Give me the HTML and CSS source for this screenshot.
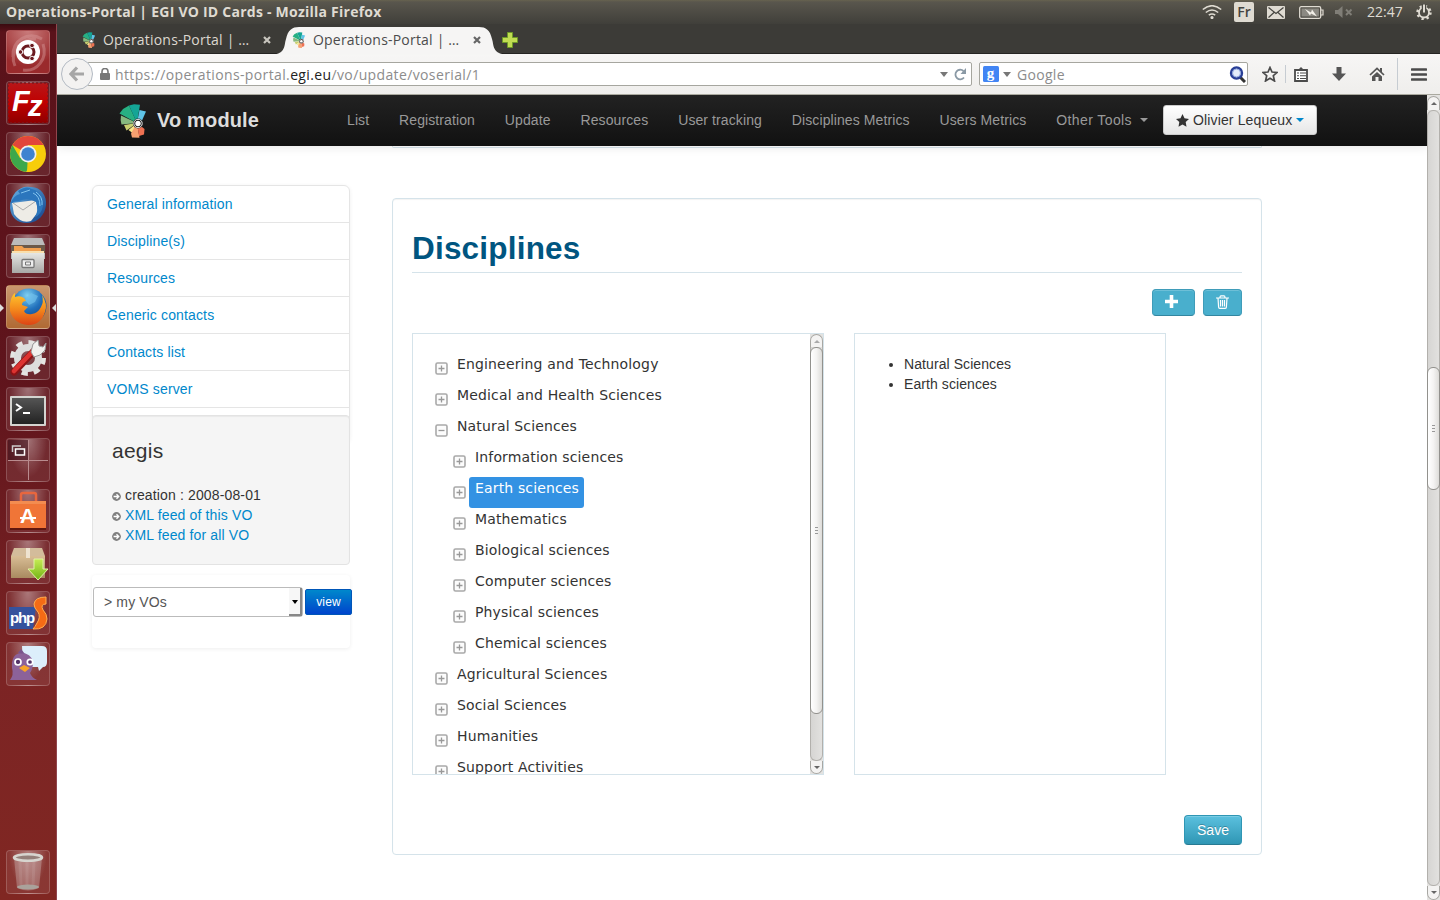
FILE: index.html
```html
<!DOCTYPE html>
<html lang="en">
<head>
<meta charset="utf-8">
<title>Operations-Portal | EGI VO ID Cards</title>
<link rel="stylesheet" href="styles.css">
</head>
<body>
<svg class="defs" width="0" height="0">
  <defs>
    <symbol id="fan" viewBox="0 0 28 34">
      <path d="M18 19 .5 9.500 4 5 10 1.500z" fill="#27b083"/>
      <path d="M18 19 10 1.500 15 .3 21 .8z" fill="#14a596"/>
      <path d="M18 19 20.500 6l6.500 1.500-4 9z" fill="#5fc4e8"/>
      <path d="M18 19 2 11.500q-1 5 .5 9z" fill="#86b97f"/>
      <path d="M18 19 5 21l2.500 5.500z" fill="#c9d070"/>
      <path d="M18 19 9.500 26l4 3z" fill="#f6e389"/>
      <path d="M18 19 12 29.500l1 4 7.500.3z" fill="#f6a070"/>
      <path d="M18 19 20 32l5-1.500.5-5.500z" fill="#ee7152"/>
      <circle cx="19" cy="19.500" r="5" fill="#1b1b1b"/>
      <circle cx="19" cy="19.500" r="4.200" fill="none" stroke="#fff" stroke-width=".9"/>
      <circle cx="19" cy="19.500" r="2.700" fill="#fff"/>
    </symbol>
    <symbol id="plus" viewBox="0 0 13 13">
      <rect x="1" y="1" width="11" height="11" rx="1.500" fill="#fcfcfc" stroke="#a9a9a9" stroke-width="1.600"/>
      <path d="M3.500 6.500h6M6.500 3.500v6" stroke="#999" stroke-width="1.300"/>
    </symbol>
    <symbol id="minus" viewBox="0 0 13 13">
      <rect x="1" y="1" width="11" height="11" rx="1.500" fill="#fcfcfc" stroke="#a9a9a9" stroke-width="1.600"/>
      <path d="M3.500 6.500h6" stroke="#999" stroke-width="1.300"/>
    </symbol>
    <symbol id="arrow" viewBox="0 0 9 9">
      <circle cx="4.500" cy="4.500" r="4.400" fill="#808080"/>
      <path d="M1.600 4.500H6M4.500 2.200 6.800 4.500 4.500 6.800" stroke="#fff" stroke-width="1.300" fill="none"/>
    </symbol>
    <linearGradient id="box" x2="0" y2="1"><stop stop-color="#d8bd95"/><stop offset="1" stop-color="#a98a60"/></linearGradient>
    <linearGradient id="dark" x2="0" y2="1"><stop stop-color="#555"/><stop offset="1" stop-color="#222"/></linearGradient>
    <linearGradient id="grey" x2="0" y2="1"><stop stop-color="#e6e6e4"/><stop offset="1" stop-color="#a8a8a6"/></linearGradient>
    <linearGradient id="fzbg" x2="0" y2="1"><stop stop-color="#b81618"/><stop offset=".5" stop-color="#c00000"/><stop offset="1" stop-color="#8e0000"/></linearGradient>
    <linearGradient id="fox" x2="0" y2="1"><stop stop-color="#ffc52e"/><stop offset=".5" stop-color="#f48a1c"/><stop offset="1" stop-color="#dd4414"/></linearGradient>
    <radialGradient id="globe" cx=".45" cy=".2" r=".8"><stop stop-color="#7fd0f2"/><stop offset=".5" stop-color="#2272bd"/><stop offset="1" stop-color="#123a78"/></radialGradient>
    <linearGradient id="bird" x2="1" y2="1"><stop stop-color="#66b3e8"/><stop offset="1" stop-color="#123f86"/></linearGradient>
    <linearGradient id="green" x2="0" y2="1"><stop stop-color="#c6ec55"/><stop offset="1" stop-color="#71b414"/></linearGradient>
  </defs>
</svg>

<div class="titlebar">
  <span class="wintitle">Operations-Portal | EGI VO ID Cards - Mozilla Firefox</span>
  <div class="tray">
    <svg width="20" height="14" viewBox="0 0 20 14" fill="none" stroke="#dfdbd2" stroke-width="1.600"><path d="M.8 4.500q9.200-7.500 18.400 0M3.800 7.500q6.200-5 12.400 0M6.800 10.200q3.200-2.400 6.400 0"/><circle cx="10" cy="12.500" r=".8" fill="#dfdbd2"/></svg>
    <span class="kbd">Fr</span>
    <svg class="mail" width="18" height="13" viewBox="0 0 18 13"><rect width="18" height="13" rx="1" fill="#dfdbd2"/><path d="m1.500 1.500 7.500 6 7.500-6M1.500 11.500 7 6.500M16.500 11.500 11 6.500" stroke="#45443f" stroke-width="1.200" fill="none"/></svg>
    <svg class="bat" width="25" height="13" viewBox="0 0 25 13"><rect x=".7" y=".7" width="21" height="11.600" rx="1.500" fill="none" stroke="#dfdbd2" stroke-width="1.300"/><rect x="2.500" y="2.500" width="17.400" height="8" fill="#8b8982"/><path d="M22 4h2v5h-2" fill="none" stroke="#dfdbd2" stroke-width="1.200"/><path d="m6 3 6 3.500 1-3 5 7-6-3-1 2z" fill="#f2efe8"/></svg>
    <svg class="vol" width="18" height="12" viewBox="0 0 18 12"><path d="M0 4h3l4.500-4v12L3 8H0z" fill="#807e77"/><path d="m11 3.500 5.500 5.500M16.500 3.500 11 9" stroke="#807e77" stroke-width="1.900"/></svg>
    <span class="clock">22:47</span>
    <svg class="gear" width="16" height="16" viewBox="0 0 16 16" fill="none" stroke="#dfdbd2"><circle cx="8" cy="8.500" r="6.300" stroke-width="2.800" stroke-dasharray="2.200 2.740"/><circle cx="8" cy="8.500" r="5" stroke-width="1.800"/><path d="M8 0v8" stroke="#4a4943" stroke-width="4.500"/><path d="M8 .5v8" stroke-width="2"/></svg>
  </div>
</div>

<div class="desktop">
  <aside class="launcher">
    <div class="tile red"><svg viewBox="0 0 44 44"><path d="M7 27C6 10 22 1 36 9M37 14c5 15-6 28-20 26M9 36C2 20 18 8 30 9" stroke="#d69a9a" stroke-width="3" fill="none" opacity=".45"/><circle cx="22" cy="22" r="12" fill="#fff"/><circle cx="22" cy="22" r="6" fill="none" stroke="#6b1a1f" stroke-width="3"/><g fill="#6b1a1f" stroke="#fff" stroke-width="1"><circle cx="14.500" cy="22" r="2.300"/><circle cx="26" cy="15.500" r="2.300"/><circle cx="26" cy="28.500" r="2.300"/></g></svg></div>
    <div class="tile"><svg viewBox="0 0 44 44"><rect x="2" y="2" width="40" height="40" fill="url(#fzbg)"/><rect x="2" y="2" width="40" height="40" fill="none" stroke="#7a1a1f" stroke-width="1.500" stroke-dasharray="2 2"/><text class="fz" x="6" y="30">F<tspan x="22" y="35">z</tspan></text></svg></div>
    <div class="tile"><svg viewBox="0 0 44 44"><circle cx="22" cy="22" r="18" fill="#f7cd0b"/><path d="M22 22 6.400 13A18 18 0 0 1 37.600 13H22z" fill="#e2463b"/><path d="M22 22 21 40A18 18 0 0 1 6.400 13L14 26z" fill="#3da84b"/><path d="m29 26-9 14 4-.2z" fill="#f7cd0b"/><circle cx="22" cy="22" r="8.500" fill="#f1f1f1"/><circle cx="22" cy="22" r="6.800" fill="#3f83d0"/></svg></div>
    <div class="tile"><svg viewBox="0 0 44 44"><path d="M4 25C4 10 15 2 24 4c10-1 17 8 16 18-1 10-8 17-17 18C12 41 5 35 4 25z" fill="url(#bird)"/><path d="m6 20 24-3 2 12-7 9q-10 3-17-7z" fill="#eeece6"/><path d="m7 20 10 7 13-9" stroke="#aaa" stroke-width="1" fill="none"/><path d="M4 21q4-9 10-10L12 8q8-6 14-2 12 3 11 17-2 9-8 11 4-7 1-15-8-5-17-1-5 0-9 3z" fill="#2b76bd"/><path d="m15 10 9-3M27 10q7 3 7 13M30 9q7 5 6 13" stroke="#83c3ed" fill="none"/></svg></div>
    <div class="tile"><svg viewBox="0 0 44 44"><path d="M8 4h28l3 7v14H5V11z" fill="#bbb"/><path d="M5 11h34v8H5z" fill="#6b5949"/><path d="M8 12h8l2 2h17v6H8z" fill="#f1a050"/><path d="M6 17h32v2H6z" fill="#f9dfad"/><path d="M6 19h32v20H6z" fill="url(#grey)"/><rect x="16" y="25.500" width="12" height="8" rx="1" fill="#eee" stroke="#777" stroke-width="1.300"/><path d="M19.500 28h5v3h-5z" fill="none" stroke="#777"/></svg></div>
    <div class="tile active"><svg viewBox="0 0 44 44"><circle cx="23" cy="21" r="17.500" fill="url(#globe)"/><path d="m25 8 7 3-3 6-6 3-4-5z" fill="#72c2ed" opacity=".65"/><path d="M5 14q2-5 4-6v4q5-2 9 1l2 3q-4 0-4 4l6 2-4 4q2 4 8 3 6-1 9-7 3-5 1-12 6 9 3 17-4 13-17 13Q8 39 4 26q-1-6 1-12z" fill="url(#fox)"/></svg></div>
    <div class="tile"><svg viewBox="0 0 44 44"><circle cx="22" cy="22" r="15" fill="none" stroke="#e4e4e2" stroke-width="6" stroke-dasharray="6 5.780"/><circle cx="22" cy="22" r="10.500" fill="none" stroke="#ddd" stroke-width="7"/><path d="m8 36 20-21" stroke="#8e1315" stroke-width="7" stroke-linecap="round"/><path d="m8 35 19-20" stroke="#dd3331" stroke-width="4.500" stroke-linecap="round"/><path d="m25 16 2-8 5-4 1 6 4 1 3-4-1 7-5 5-6 2z" fill="#f1f1ef" stroke="#999"/></svg></div>
    <div class="tile"><svg viewBox="0 0 44 44"><rect x="4" y="9" width="36" height="30" rx="1" fill="#d4d4d0"/><rect x="6" y="11" width="32" height="26" fill="url(#dark)"/><path d="m10 17 5 3.500-5 3.500" stroke="#fff" stroke-width="2" fill="none"/><path d="M17 26h7" stroke="#fff" stroke-width="2"/></svg></div>
    <div class="tile"><svg viewBox="0 0 44 44"><path d="M2 2h20v20H2z" fill="#40101a" opacity=".6"/><path d="M22.500 2v40M2 22.500h40" stroke="#b98b8e"/><path d="M6.500 14V8H15" stroke="#ccc" fill="none" stroke-width="1.500"/><path d="M9.500 11h9v6h-9z" fill="#4a2830" stroke="#fff" stroke-width="1.500"/></svg></div>
    <div class="tile"><svg viewBox="0 0 44 44"><path d="M15 15V6q0-2 2-2h11q2 0 2 2v9" stroke="#e8663e" stroke-width="2.500" fill="none"/><path d="M4 12h36v28H4z" fill="#f07537"/><path d="M4 12h36v3H4z" fill="#f38c50"/><path d="M4 39h36v2H4z" fill="#61170e"/><text class="bag" x="14" y="34">A</text><path d="M14 29h16" stroke="#fff" stroke-width="2"/></svg></div>
    <div class="tile"><svg viewBox="0 0 44 44"><path d="m8 8 28 0 3 8H5z" fill="#d3bc9b"/><path d="M5 16h34v22H5z" fill="url(#box)"/><path d="M20 8h4v10h-4z" fill="#eee3d0"/><path d="M28 19h9v10h5L32 40 22 29h6z" fill="url(#green)" stroke="#e0f4a4" stroke-width="1"/></svg></div>
    <div class="tile"><svg viewBox="0 0 44 44"><path d="M3 16h27l-3 22H3z" fill="#35529d"/><path d="M40 6q-11 0-12 7 0 4 4 8 3 5-1 11-2 4-4 6 13 1 14-10 0-5-4-9-3-6 3-6z" fill="#f56b15" stroke="#ffae52"/><text class="php" x="4" y="32">php</text></svg></div>
    <div class="tile"><svg viewBox="0 0 44 44"><path d="M16 4h20q5 0 5 5v11q0 5-4 5l-4 4-1-4H17z" fill="#dceefb"/><path d="M4 38q4-5 2-12-1-14 9-15 10 0 12 9 0 7-3 11 2 5 7 7z" fill="#8c6299"/><path d="m12 11 3-4 4 5z" fill="#79538c"/><circle cx="12" cy="20" r="3" fill="#543468" stroke="#fff" stroke-width="1.700"/><circle cx="24" cy="20" r="2.700" fill="#543468" stroke="#fff" stroke-width="1.700"/><path d="m13 26 5-3 6 3-5 4z" fill="#f8a427"/></svg></div>
    <div class="tile trash"><svg viewBox="0 0 44 44"><path d="m8 8 3 30q11 5 22 0l3-30z" fill="#ded1cf" opacity=".32"/><path d="m14 12 1 23M21 12v25M28 12l-1 24" stroke="#fff" opacity=".08" stroke-width="3"/><ellipse cx="22" cy="37" rx="11" ry="2.500" fill="#aaa29b"/><ellipse cx="22" cy="7.500" rx="14" ry="3.200" fill="#94807a" stroke="#d7d5cf" stroke-width="2.500"/></svg></div>
  </aside>

  <div class="browser">
    <div class="tabs">
      <svg class="tabshape" width="244" height="30" viewBox="0 0 244 30"><path d="M0 29.500C14 29 12 20 14 14 16 5 20 2 27 2H207C214 2 218 5 220 14 222 20 220 29 235 29.500z" fill="#f6f5f4"/></svg>
      <div class="tab"><svg class="fav"><use href="#fan"/></svg><span class="tabtext">Operations-Portal | …</span><svg class="x" viewBox="0 0 8 8"><path d="m1 1 6 6M7 1 1 7"/></svg></div>
      <div class="tab current"><svg class="fav"><use href="#fan"/></svg><span class="tabtext">Operations-Portal | …</span><svg class="x" viewBox="0 0 8 8"><path d="m1 1 6 6M7 1 1 7"/></svg></div>
      <svg class="newtab" width="16" height="16" viewBox="0 0 16 16"><path d="M5.500.5h5v5h5v5h-5v5h-5v-5h-5v-5h5z" fill="#c0dc52" stroke="#6d9a27"/></svg>
    </div>
    <div class="toolbar">
      <div class="back"><svg width="16" height="16" viewBox="0 0 16 16"><path d="M8 1.500 2 8l6 6.500M2 8h13" stroke="#a6a6a6" stroke-width="3.200" fill="none"/></svg></div>
      <div class="url">
        <svg width="10" height="12" viewBox="0 0 10 12"><path d="M2 6V3.500a3 3 0 0 1 6 0V6" stroke="#777" stroke-width="1.600" fill="none"/><rect y="5" width="10" height="7" rx="1" fill="#777"/></svg>
        <span class="address">https://operations-portal.<b>egi.eu</b>/vo/update/voserial/1</span>
        <i class="tri"></i>
        <svg class="reload" width="13" height="13" viewBox="0 0 13 13"><path d="M10 9.500A4.800 4.800 0 1 1 9.500 3" fill="none" stroke="#8a99a5" stroke-width="1.800"/><path d="M12 0v6H6.500z" fill="#8a99a5"/></svg>
      </div>
      <div class="search">
        <svg width="16" height="16"><rect width="16" height="16" rx="1.500" fill="#4285f4"/><text class="goog" x="3.800" y="12">g</text></svg>
        <i class="tri"></i><span class="google">Google</span>
        <svg class="lens" width="17" height="17" viewBox="0 0 17 17"><path d="m11 11 5 5" stroke="#333" stroke-width="3"/><circle cx="7.500" cy="7" r="5.500" fill="#e5edfa" stroke="#293f96" stroke-width="2.400"/><circle cx="7.500" cy="7" r="4" fill="none" stroke="#8fa5dd"/></svg>
      </div>
      <div class="tools">
        <svg width="16" height="16" viewBox="0 0 16 16"><path d="m8 1.500 2 4.500 5 .5-3.700 3.200L12.500 15 8 12.300 3.500 15l1.200-5.300L1 6.500 6 6z" fill="none" stroke="#4b4b4b" stroke-width="1.700"/></svg>
        <i class="sep"></i>
        <svg width="14" height="15" viewBox="0 0 14 15"><path d="M1 3h12v11H1z" fill="#fff" stroke="#4b4b4b" stroke-width="1.800"/><path d="m4 3 3-3 3 3z" fill="#4b4b4b"/><path d="M3 6h2M6 6h6M3 8.800h2M6 8.800h6M3 11.500h2M6 11.500h6" stroke="#4b4b4b" stroke-width="1.100"/></svg>
        <svg width="14" height="14" viewBox="0 0 14 14"><path d="M4.500 0h5v6.500H14L7 14 0 6.500h4.500z" fill="#555"/></svg>
        <svg width="16" height="14" viewBox="0 0 16 14"><path d="M1 8 8 1.500 15 8" fill="none" stroke="#555" stroke-width="1.700"/><path d="M3 9.500 8 5l5 4.500V14H9.500v-4h-3v4H3z" fill="#555"/><path d="M11 1h2v4h-2z" fill="#555"/></svg>
        <i class="sep tall"></i>
        <svg width="16" height="13" viewBox="0 0 16 13"><path d="M1 1.500h14M1 6.500h14M1 11.500h14" stroke="#4b4b4b" stroke-width="2.700" stroke-linecap="round"/></svg>
      </div>
    </div>

    <div class="viewport">
      <div class="page">
        <nav class="navbar">
          <svg class="logo"><use href="#fan"/></svg>
          <span class="brand">Vo module</span>
          <div class="links"><a>List</a><a>Registration</a><a>Update</a><a>Resources</a><a>User tracking</a><a>Disciplines Metrics</a><a>Users Metrics</a><a class="drop">Other Tools<i class="caret"></i></a></div>
          <div class="user"><svg width="13" height="13" viewBox="0 0 13 13"><path d="m6.500 0 2 4.300 4.500.6-3.300 3.200.8 4.700-4-2.300-4 2.300.8-4.700L0 4.900l4.500-.6z" fill="#333"/></svg><span>Olivier Lequeux</span><i class="caret blue"></i></div>
        </nav>
        <div class="content">
          <div class="side">
            <ul class="sidenav"><li>General information</li><li>Discipline(s)</li><li>Resources</li><li>Generic contacts</li><li>Contacts list</li><li>VOMS server</li></ul>
            <section class="well">
              <h3>aegis</h3>
              <p><svg><use href="#arrow"/></svg>creation : 2008-08-01</p>
              <p class="link"><svg><use href="#arrow"/></svg>XML feed of this VO</p>
              <p class="link"><svg><use href="#arrow"/></svg>XML feed for all VO</p>
            </section>
            <div class="picker"><div class="select"><span>&gt; my VOs</span><b><i></i></b></div><div class="view">view</div></div>
          </div>
          <main class="main">
            <div class="prev"></div>
            <section class="panel">
              <h1>Disciplines</h1>
              <div class="actions">
                <div class="btn add"><svg width="13" height="13" viewBox="0 0 13 13"><path d="M6.500 0v13M0 6.500h13" stroke="#fff" stroke-width="3.600"/></svg></div>
                <div class="btn del"><svg width="13" height="14" viewBox="0 0 13 14" fill="none" stroke="#fff" stroke-width="1.200"><path d="M0 3h13M4 2.500Q4 .8 5 .8h3q1 0 1 1.700M2 3l.6 9q0 1.300 1.200 1.300h5.400q1.200 0 1.200-1.300L11 3M4.500 5v6.500M6.500 5v6.500M8.500 5v6.500"/></svg></div>
              </div>
              <div class="columns">
                <div class="tree">
                  <ul>
                    <li><svg><use href="#plus"/></svg><span>Engineering and Technology</span></li>
                    <li><svg><use href="#plus"/></svg><span>Medical and Health Sciences</span></li>
                    <li><svg><use href="#minus"/></svg><span>Natural Sciences</span></li>
                    <li class="sub"><svg><use href="#plus"/></svg><span>Information sciences</span></li>
                    <li class="sub"><svg><use href="#plus"/></svg><span class="selected">Earth sciences</span></li>
                    <li class="sub"><svg><use href="#plus"/></svg><span>Mathematics</span></li>
                    <li class="sub"><svg><use href="#plus"/></svg><span>Biological sciences</span></li>
                    <li class="sub"><svg><use href="#plus"/></svg><span>Computer sciences</span></li>
                    <li class="sub"><svg><use href="#plus"/></svg><span>Physical sciences</span></li>
                    <li class="sub"><svg><use href="#plus"/></svg><span>Chemical sciences</span></li>
                    <li><svg><use href="#plus"/></svg><span>Agricultural Sciences</span></li>
                    <li><svg><use href="#plus"/></svg><span>Social Sciences</span></li>
                    <li><svg><use href="#plus"/></svg><span>Humanities</span></li>
                    <li><svg><use href="#plus"/></svg><span>Support Activities</span></li>
                  </ul>
                  <div class="scroll inner"><i class="up"></i><div class="trough"><b></b></div><i class="down"></i></div>
                </div>
                <div class="chosen"><ul><li>Natural Sciences</li><li>Earth sciences</li></ul></div>
              </div>
              <div class="save">Save</div>
            </section>
          </main>
        </div>
      </div>
      <div class="scroll outer"><i class="up"></i><div class="trough"><b></b></div><i class="down"></i></div>
    </div>
  </div>
</div>
</body>
</html>
```
FILE: styles.css
```css
* { box-sizing: border-box; }
body { margin: 0; width: 1440px; height: 900px; overflow: hidden; display: flex; flex-direction: column; font: 14px/20px "Liberation Sans", Arial, sans-serif; color: #333; background: #fff; }
svg { display: block; flex: none; }
ul, p, h1, h3 { margin: 0; padding: 0; }
ul { list-style: none; }
.defs { position: absolute; }

.titlebar { height: 24px; flex: none; display: flex; align-items: center; justify-content: space-between; padding: 0 8px 0 6px; background: linear-gradient(#67634f 0, #59564d 2px, #403f3a); color: #dfdbd2; font-family: "Open Sans", "Noto Sans", sans-serif; }
.wintitle { font-weight: 700; font-size: 14px; letter-spacing: .24px; white-space: nowrap; }
.tray { display: flex; align-items: center; }
.kbd { width: 20px; height: 20px; margin-left: 12px; border-radius: 2px; background: #dfdbd2; color: #45443f; text-align: center; font-size: 14px; font-weight: 600; }
.mail { margin-left: 13px; }
.bat { margin-left: 14px; }
.vol { margin-left: 11px; }
.clock { width: 37px; margin-left: 14px; font-size: 14px; letter-spacing: 0; }
.gear { margin-left: 12px; }

.desktop { flex: 1; display: flex; min-height: 0; }
.launcher { width: 57px; flex: none; display: flex; flex-direction: column; gap: 7px; padding: 6px 0 6px 6px; border-right: 1px solid #91454d; background: linear-gradient(#3a0b10 0, #5a121a 8px, #5f141c 40%, #7c2424 75%, #802722); }
.tile { position: relative; flex: none; width: 44px; height: 44px; border-radius: 4px; background: radial-gradient(ellipse at 50% 0, #fff6, #ffffff14 65%); border: 1px solid #ffffff2e; }
.tile svg { width: 44px; height: 44px; margin: -1px; }
.tile.red { background: radial-gradient(circle at 50% 0, #c97b7b, #9a2a2c 75%); }
.tile.active { background: linear-gradient(#c9976f, #b06a34); }
.tile.active::before, .tile.active::after { content: ""; position: absolute; top: 18px; border: 4px solid transparent; }
.tile.active::before { left: -7px; border-left-color: #ddd; border-right: 0; }
.tile.active::after { right: -7px; border-right-color: #ddd; border-left: 0; }
.trash { margin-top: auto; }
.fz { font: italic 700 29px "Liberation Sans", sans-serif; fill: #fff; }
.bag { font: 700 21px "Liberation Sans", sans-serif; fill: #fff; }
.php { font: 700 15px "Liberation Sans", sans-serif; fill: #fff; letter-spacing: -1.200px; }

.browser { flex: 1; min-width: 0; display: flex; flex-direction: column; }
.tabs { position: relative; height: 30px; flex: none; display: flex; align-items: center; padding: 2px 0 0 24px; background: #3c3b37; border-bottom: 1px solid #252422; font-family: "Open Sans", "Noto Sans", sans-serif; color: #dcd8d0; }
.tabshape { position: absolute; left: 215px; top: 1px; }
.tab { position: relative; width: 210px; display: flex; align-items: center; }
.tab.current { color: #4c4c4c; }
.fav { width: 16px; height: 16px; }
.tabtext { width: 150px; margin: 0 10px 0 6px; white-space: nowrap; letter-spacing: .2px; }
.x { width: 8px; height: 8px; stroke: #c8c5be; stroke-width: 2.200; }
.current .x { stroke: #666; }
.newtab { position: relative; margin-left: 1px; }
.toolbar { height: 41px; flex: none; display: flex; align-items: center; padding: 0 0 0 4px; background: linear-gradient(#f7f6f5, #efeeec); border-bottom: 1px solid #aaa99f; font-family: "Open Sans", "Noto Sans", sans-serif; }
.back { position: relative; z-index: 1; width: 32px; height: 32px; flex: none; border: 1px solid #b3bac3; border-radius: 50%; background: #f3f2f1; display: flex; align-items: center; justify-content: center; }
.url { width: 885px; height: 24px; margin-left: -6px; padding: 0 4px 0 12px; display: flex; align-items: center; border: 1px solid #a6a69f; border-radius: 2px; background: #fff; }
.address { margin: 2px 0 0 5px; color: #8c8c8c; flex: 1; letter-spacing: .37px; }
.address b { font-weight: 400; color: #222; }
.tri { border: 5px solid transparent; border-top-color: #777; border-bottom: 0; }
.url .tri { border-width: 5px 4px 0; }
.reload { margin-left: 6px; }
.search { width: 269px; height: 24px; margin-left: 7px; padding: 0 1px 0 3px; display: flex; align-items: center; border: 1px solid #a6a69f; border-radius: 2px; background: #fff; }
.search .tri { margin: 0 6px 0 4px; border-width: 5px 4px 0; }
.goog { font: 700 15px "Liberation Serif", serif; fill: #fff; }
.google { flex: 1; margin-top: 2px; color: #8c8c8c; letter-spacing: .3px; }
.tools { display: flex; align-items: center; margin-left: 14px; }
.sep { width: 1px; height: 18px; margin: 0 8px 0 7px; background: #c6ccd2; }
.tools svg + svg { margin-left: 24px; }
.tools svg + svg + svg { margin-left: 23px; }
.sep.tall { height: 32px; margin: 0 13px 0 12px; }

.viewport { flex: 1; display: flex; min-height: 0; }
.page { width: 1370px; height: 805px; overflow: hidden; }
.navbar { position: relative; z-index: 2; height: 51px; display: flex; align-items: center; padding: 0 0 1px 62px; background: linear-gradient(#222, #111); box-shadow: 0 1px 10px #0000001a; }
.logo { width: 28px; height: 34px; margin-top: 1px; }
.brand { width: 175px; margin-left: 10px; font-weight: 700; font-size: 20px; color: #ddd; letter-spacing: .15px; }
.links { display: flex; width: 801px; justify-content: space-between; margin-left: 15px; color: #999; white-space: nowrap; letter-spacing: .1px; }
.drop { display: flex; align-items: center; letter-spacing: .4px; }
.caret { border: 4px solid transparent; border-top-color: #999; border-bottom: 0; margin-left: 8px; }
.user { width: 154px; height: 30px; margin-left: 15px; display: flex; align-items: center; padding-left: 12px; border-radius: 3px; background: linear-gradient(#fff, #e6e6e6); border: 1px solid #ccc; white-space: nowrap; }
.user span { margin-left: 4px; letter-spacing: .14px; }
.caret.blue { border-top-color: #08c; margin-left: 4px; }
.content { display: flex; padding-left: 35px; }
.side { width: 260px; padding-top: 39px; letter-spacing: .14px; }
.sidenav { width: 258px; height: 258px; border: 1px solid #e5e5e5; border-radius: 6px; box-shadow: 0 1px 4px #00000011; color: #08c; }
.sidenav li { height: 37px; padding: 8px 14px; border-bottom: 1px solid #e5e5e5; }
.well { position: relative; width: 258px; height: 150px; margin-top: -28px; padding: 23px 19px; border: 1px solid #e3e3e3; border-radius: 4px; background: #f5f5f5; box-shadow: inset 0 1px 1px #0000000d; }
.well h3 { font-weight: 400; font-size: 21px; line-height: 24px; margin-bottom: 22px; letter-spacing: .25px; }
.well p { display: flex; align-items: center; }
.well p svg { width: 9px; height: 9px; margin: 3px 4px 0 0; }
.link { color: #08c; }
.picker { width: 258px; height: 73px; margin-top: 10px; padding: 12px 0 0 1px; display: flex; gap: 2px; border-radius: 4px; box-shadow: 0 1px 4px #00000012; }
.select { width: 210px; flex: none; height: 30px; padding: 0 0 0 10px; border: 1px solid #bbb; border-radius: 3px; display: flex; align-items: center; justify-content: space-between; color: #555; background: #fff; }
.select b { width: 13px; height: 28px; padding: 12px 0 0 3px; border-right: 2px solid #888; border-bottom: 2px solid #888; background: #f7f7f7; }
.select i { display: block; width: 6px; border: 3px solid transparent; border-top: 4px solid #000; border-bottom: 0; }
.view { width: 47px; flex: none; height: 26px; margin-top: 2px; border-radius: 2px; border: 1px solid #0056b8; background: linear-gradient(#0088cc, #0044cc); color: #fff; font-size: 12px; line-height: 24px; text-align: center; }

.main { width: 870px; margin-left: 40px; }
.prev { height: 2px; border: 1px solid #d5e3ea; border-top: 0; border-radius: 0 0 4px 4px; }
.panel { height: 657px; margin-top: 50px; padding: 29px 19px 0; border: 1px solid #d5e3ea; border-radius: 4px; box-shadow: inset 0 1px 1px #0000000d; display: flex; flex-direction: column; }
h1 { height: 45px; border-bottom: 1px solid #d5e3ea; font-size: 31.5px; line-height: 40px; color: #005580; letter-spacing: .2px; }
.actions { display: flex; justify-content: flex-end; gap: 8px; margin-top: 16px; }
.btn { height: 27px; border-radius: 4px; border: 1px solid #3f9cb9; border-bottom-color: #3386a0; background: #49afcd; box-shadow: inset 0 1px 0 #ffffff33; display: flex; justify-content: center; }
.add { width: 43px; padding: 5px 4px 0 0; }
.del { width: 39px; padding-top: 5px; }
.columns { display: flex; gap: 30px; margin-top: 17px; }
.tree { width: 412px; height: 442px; border: 1px solid #d5e3ea; display: flex; overflow: hidden; }
.tree ul { flex: 1; padding: 19px 0 0 22px; font-family: "DejaVu Sans", sans-serif; white-space: nowrap; letter-spacing: .15px; }
.tree li { height: 31px; display: flex; }
.tree li.sub { padding-left: 18px; }
.tree li svg { width: 13px; height: 13px; margin: 9px 3px 0 0; }
.tree span { padding: 1px 6px; border-radius: 3px; }
.tree .selected { background: #3392e3; color: #fff; padding-right: 5px; }
.chosen { width: 312px; height: 442px; border: 1px solid #d5e3ea; padding: 20px 0 0 49px; letter-spacing: .08px; }
.chosen ul { list-style: disc; }
.save { align-self: flex-end; width: 58px; height: 30px; margin-top: 40px; border: 1px solid #2f96b4; border-bottom-color: #277a92; border-radius: 4px; background: linear-gradient(#5bc0de, #2f96b4); box-shadow: inset 0 1px 0 #ffffff33; color: #fff; text-align: center; line-height: 28px; text-shadow: 0 -1px 0 #00000040; }

.scroll { width: 13px; flex: none; display: flex; flex-direction: column; background: #e3e2e0; }
.scroll i { height: 14px; border: 1px solid #a8a7a3; background: #f4f3f2; display: flex; justify-content: center; align-items: center; }
.scroll.inner i { height: 13px; }
.scroll i::before { content: ""; border: 3px solid transparent; }
.scroll .up { border-radius: 7px 7px 0 0; border-bottom: 0; }
.scroll .down { border-radius: 0 0 7px 7px; border-top: 0; }
.scroll .up::before { border-bottom-color: #666; border-top: 0; }
.scroll.inner .up::before { border-bottom-color: #aaa; }
.scroll .down::before { border-top-color: #666; border-bottom: 0; }
.trough { flex: 1; border: 1px solid #b2b0ac; border-top: 0; border-radius: 0 0 6px 6px; background: linear-gradient(90deg, #d6d5d3, #e2e1df); }
.outer .trough { border-top: 1px solid #b2b0ac; border-radius: 6px; }
.trough b { display: flex; margin: 0 -1px; border: 1px solid #92918d; border-radius: 6px; background: linear-gradient(90deg, #fff, #f4f3f2 50%, #dddcd9); align-items: center; justify-content: center; }
.trough b::before { content: ""; width: 3px; height: 7px; background: repeating-linear-gradient(#999 0 1px, transparent 1px 3px); }
.outer { padding-top: 1px; }
.outer .trough b { height: 123px; margin-top: 256px; }
.inner b { height: 367px; }
```
